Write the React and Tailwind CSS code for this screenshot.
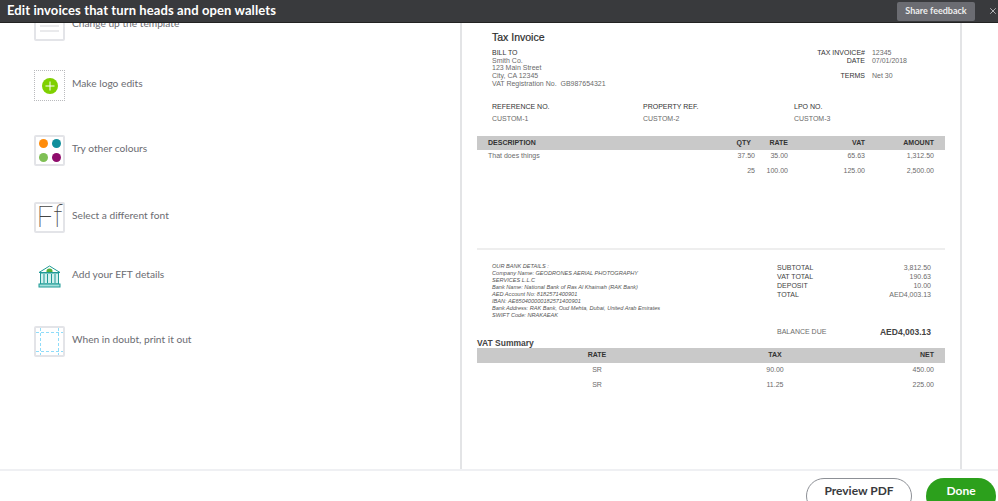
import { X } from 'lucide-react';

function IconBox({ className = '', children }) {
  return (
    <div className={`flex h-[31px] w-[31px] shrink-0 items-center justify-center rounded-[2px] border-2 border-[#e3e4e8] bg-white ${className}`}>
      {children}
    </div>
  );
}

function TemplateIcon() {
  return (
    <IconBox>
      <svg width="27" height="27" viewBox="0 0 27 27">
        <path d="M4 9h19M4 14h19M4 19h19" stroke="#d4d5d9" strokeWidth="1" />
      </svg>
    </IconBox>
  );
}

function LogoIcon() {
  return (
    <div className="flex h-[31px] w-[31px] shrink-0 items-center justify-center border border-dotted border-[#b9babd]">
      <svg width="16" height="16" viewBox="0 0 16 16">
        <circle cx="8" cy="8" r="8" fill="#7fd000" />
        <path d="M8 3.5v9M3.5 8h9" stroke="#fff" strokeWidth="1" />
      </svg>
    </div>
  );
}

function ColoursIcon() {
  return (
    <IconBox>
      <div className="grid grid-cols-2 gap-x-[4px] gap-y-[5px]">
        <span className="h-[9px] w-[9px] rounded-full bg-[#ff8c0a]" />
        <span className="h-[9px] w-[9px] rounded-full bg-[#0f8f9c]" />
        <span className="h-[9px] w-[9px] rounded-full bg-[#7fbf55]" />
        <span className="h-[9px] w-[9px] rounded-full bg-[#8f0c6c]" />
      </div>
    </IconBox>
  );
}

function FontIcon() {
  return (
    <IconBox>
      <span className="font-['Roboto',sans-serif] text-[29px] leading-none font-thin text-[#444]">Ff</span>
    </IconBox>
  );
}

function BankIcon() {
  return (
    <div className="flex h-[31px] w-[31px] shrink-0 items-center justify-center">
      <svg width="23" height="23" viewBox="0 0 23 23">
        <path d="M11.5 1 22 7.5H1z" fill="#fff" stroke="#1f9a96" strokeWidth="1" strokeLinejoin="round" />
        <path d="M8.5 6a3 2.5 0 0 1 6 0v1h-6z" fill="#53b03c" />
        <rect x="2.5" y="8" width="18" height="11" fill="#d3f1ee" stroke="#1f9a96" strokeWidth="1" />
        <path d="M6 9v9M9.5 9v9M13.5 9v9M17 9v9" stroke="#1f9a96" strokeWidth="1" />
        <rect x="1" y="19" width="21" height="3" fill="#a3e0db" stroke="#1f9a96" strokeWidth="1" />
      </svg>
    </div>
  );
}

function PrintIcon() {
  return (
    <IconBox>
      <svg width="27" height="27" viewBox="0 0 27 27" fill="none" stroke="#8fdcf9" strokeWidth="1">
        <path d="M0 4.5h27M0 23.5h27M4.5 0v27M22.5 0v27" strokeDasharray="3 2" />
      </svg>
    </IconBox>
  );
}

const tips = [
  { label: 'Change up the template', Icon: TemplateIcon, mt: 'mt-0' },
  { label: 'Make logo edits', Icon: LogoIcon, mt: 'mt-[29px]' },
  { label: 'Try other colours', Icon: ColoursIcon, mt: 'mt-[34px]' },
  { label: 'Select a different font', Icon: FontIcon, mt: 'mt-[36px]' },
  { label: 'Add your EFT details', Icon: BankIcon, mt: 'mt-[28px]' },
  { label: 'When in doubt, print it out', Icon: PrintIcon, mt: 'mt-[34px]' },
];

const lineRows = [
  { desc: 'That does things', qty: '37.50', rate: '35.00', vat: '65.63', amount: '1,312.50', h: 'h-[13px]' },
  { desc: '', qty: '25', rate: '100.00', vat: '125.00', amount: '2,500.00', h: 'h-[17px]' },
];

const bankLines = [
  'OUR BANK DETAILS :',
  'Company Name: GEODRONES AERIAL PHOTOGRAPHY',
  'SERVICES L.L.C',
  'Bank Name: National Bank of Ras Al Khaimah (RAK Bank)',
  'AED Account No: 8182571400901',
  'IBAN: AE650400000182571400901',
  'Bank Address: RAK Bank, Oud Mehta, Dubai, United Arab Emirates',
  'SWIFT Code: NRAKAEAK',
];

const totals = [
  ['SUBTOTAL', '3,812.50'],
  ['VAT TOTAL', '190.63'],
  ['DEPOSIT', '10.00'],
  ['TOTAL', 'AED4,003.13'],
];

function Invoice() {
  return (
    <div className="h-full w-[502px] shrink-0 overflow-hidden border-x-2 border-[#e3e4e6] bg-white pl-[15px] font-['Liberation_Sans',Arial,sans-serif] text-[7px] text-[#6b6b6b]">
      <div className="w-[468px]">
        <div className="pt-[7px] pl-[15px] text-[10.5px] leading-[14px] font-medium text-[#2b2b2b] [-webkit-text-stroke:0.2px_#2b2b2b]">Tax Invoice</div>

        <div className="mt-[5px] flex justify-between pr-[38px] pl-[15px] leading-[7.7px]">
          <div>
            <div className="text-[#333]">BILL TO</div>
            <div>Smith Co.</div>
            <div>123 Main Street</div>
            <div>City, CA 12345</div>
            <div>VAT Registration No.&nbsp; GB987654321</div>
          </div>
          <div className="grid grid-cols-[auto_auto] content-start gap-x-[7px]">
            <div className="text-right text-[#333]">TAX INVOICE#</div>
            <div>12345</div>
            <div className="text-right text-[#333]">DATE</div>
            <div>07/01/2018</div>
            <div className="mt-[8px] text-right text-[#333]">TERMS</div>
            <div className="mt-[8px]">Net 30</div>
          </div>
        </div>

        <div className="mt-[13px] grid grid-cols-3 pl-[15px] leading-[12px]">
          {[
            ['REFERENCE NO.', 'CUSTOM-1'],
            ['PROPERTY REF.', 'CUSTOM-2'],
            ['LPO NO.', 'CUSTOM-3'],
          ].map(([head, value]) => (
            <div key={head} className="w-[148px]">
              <div className="text-[#333]">{head}</div>
              <div>{value}</div>
            </div>
          ))}
        </div>

        <div className="mt-[11.5px] grid h-[14px] grid-cols-[1fr_40px_37px_77px_69px] items-center bg-[#c9c9c9] px-[11px] font-bold text-[#333]">
          <div>DESCRIPTION</div>
          <div className="text-right">QTY</div>
          <div className="text-right">RATE</div>
          <div className="text-right">VAT</div>
          <div className="text-right">AMOUNT</div>
        </div>
        {lineRows.map((row) => (
          <div key={row.amount} className={`grid grid-cols-[1fr_40px_37px_77px_69px] items-center px-[11px] ${row.h}`}>
            <div>{row.desc}</div>
            <div className="-mr-[4px] text-right">{row.qty}</div>
            <div className="text-right">{row.rate}</div>
            <div className="text-right">{row.vat}</div>
            <div className="text-right">{row.amount}</div>
          </div>
        ))}

        <div className="mt-[68px] border-t-2 border-[#eeeeee]" />

        <div className="mt-[13px] flex">
          <div className="w-[300px] pl-[15px] text-[5.6px] leading-[7px] text-[#555] italic">
            {bankLines.map((line) => (
              <div key={line}>{line}</div>
            ))}
          </div>
          <div className="w-[154px]">
            {totals.map(([label, value]) => (
              <div key={label} className="flex justify-between leading-[9px]">
                <span className="text-[#444]">{label}</span>
                <span>{value}</span>
              </div>
            ))}
            <div className="mt-[28px] flex items-center justify-between leading-[10px]">
              <span>BALANCE DUE</span>
              <span className="text-[8.5px] font-bold text-[#444]">AED4,003.13</span>
            </div>
          </div>
        </div>

        <div className="mt-[2px] text-[8.5px] leading-[9px] font-bold text-[#444]">VAT Summary</div>
        <div className="grid h-[15px] grid-cols-[240px_116px_1fr] items-center bg-[#c9c9c9] pr-[11px] font-bold text-[#333]">
          <div className="text-center">RATE</div>
          <div className="text-center">TAX</div>
          <div className="text-right">NET</div>
        </div>
        {[
          ['SR', '90.00', '450.00'],
          ['SR', '11.25', '225.00'],
        ].map(([rate, tax, net]) => (
          <div key={net} className="grid h-[14.5px] grid-cols-[240px_116px_1fr] items-center pr-[11px]">
            <div className="text-center">{rate}</div>
            <div className="text-center">{tax}</div>
            <div className="text-right">{net}</div>
          </div>
        ))}
      </div>
    </div>
  );
}

export default function App() {
  return (
    <div className="flex h-[501px] w-[998px] flex-col overflow-hidden bg-white font-['Lato',sans-serif]">
      <header className="z-10 flex h-[23px] shrink-0 items-center justify-between border-b border-[#222] bg-[#393a3d] pl-[7px]">
        <h1 className="text-[13px] font-bold tracking-[0.1px] text-white">Edit invoices that turn heads and open wallets</h1>
        <div className="flex items-center gap-[13px]">
          <button className="flex h-[19px] w-[78px] items-center justify-center rounded-[2px] bg-[#6b6c72] text-[9px] font-bold text-[#eeeeee]">
            Share feedback
          </button>
          <X size={10} className="text-[#c9cacc]" />
        </div>
      </header>

      <main className="flex min-h-0 flex-1 overflow-hidden">
        <div className="-mt-[13px] w-[460px] shrink-0 pl-[34px]">
          {tips.map(({ label, Icon, mt }) => (
            <div key={label} className={`flex items-center gap-[7px] ${mt}`}>
              <Icon />
              <span className="-translate-y-[3px] text-[10.2px] leading-[14px] text-[#6b6c72]">{label}</span>
            </div>
          ))}
        </div>
        <Invoice />
      </main>

      <footer className="flex h-[32px] shrink-0 justify-end gap-[14px] overflow-hidden border-t-2 border-[#eff0f3] bg-white pt-[7px] pr-[2px]">
        <button className="h-[36px] w-[106px] shrink-0 rounded-full border border-[#8d9096] bg-white pb-[10px] text-[12px] font-bold text-[#393a3d]">
          Preview PDF
        </button>
        <button className="h-[36px] w-[70px] shrink-0 rounded-full bg-[#2ca01c] pb-[10px] text-[12px] font-bold text-white">
          Done
        </button>
      </footer>
    </div>
  );
}
